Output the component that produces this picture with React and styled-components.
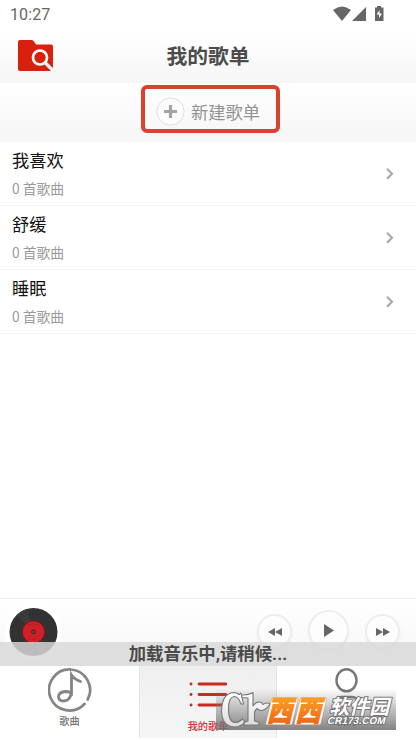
import React from "react";
import styled, { createGlobalStyle } from "styled-components";

const GlobalStyle = createGlobalStyle`
  * {
    box-sizing: border-box;
  }
  body {
    margin: 0;
    background: #fff;
    font-family: Roboto, "Noto Sans CJK SC", sans-serif;
  }
`;

const Screen = styled.div`
  position: relative;
  width: 416px;
  height: 740px;
  display: flex;
  flex-direction: column;
  background: #fff;
  overflow: hidden;
`;

const StatusBar = styled.div`
  height: 30px;
  padding: 0 31px 2px 10px;
  display: flex;
  align-items: center;
  justify-content: space-between;
  font-size: 16px;
  letter-spacing: 0.1px;
  color: #666;
`;

const Header = styled.header`
  height: 53px;
  padding: 0 18px 2px;
  display: grid;
  grid-template-columns: 36px 1fr 36px;
  align-items: center;
  background: linear-gradient(#fff, #f6f6f6);
  h1 {
    margin: 0;
    padding-top: 2px;
    font-size: 20.8px;
    line-height: 30px;
    font-weight: 700;
    text-align: center;
    color: #4c4c4c;
  }
`;

const CreateBar = styled.div`
  height: 59px;
  padding: 2px 0 0 5px;
  display: flex;
  justify-content: center;
  align-items: flex-start;
  background: linear-gradient(#fff, #f5f5f5);
`;

const CreateButton = styled.button`
  width: 139px;
  height: 48px;
  padding: 4px 0 0 11px;
  display: flex;
  align-items: center;
  gap: 6px;
  border: 4px solid #dc412d;
  border-radius: 6px;
  background: transparent;
  font-family: inherit;
  font-size: 17.3px;
  line-height: 24px;
  color: #929292;
  white-space: nowrap;
  span {
    padding-top: 3px;
  }
`;

const List = styled.ul`
  flex: 1;
  margin: 0;
  padding: 0;
  list-style: none;
`;

const Row = styled.li`
  height: 64px;
  padding: 0 22px 0 12px;
  display: flex;
  align-items: center;
  justify-content: space-between;
  border-bottom: 1px solid #f4f4f4;
`;

const RowName = styled.div`
  font-size: 17.2px;
  line-height: 26px;
  color: #111;
`;

const RowCount = styled.div`
  margin-top: 3px;
  margin-bottom: 1px;
  font-family: "Noto Sans CJK SC", sans-serif;
  font-size: 13.8px;
  line-height: 22px;
  color: #999;
`;

const Player = styled.div`
  height: 68px;
  padding: 0 16px 2px 9px;
  display: flex;
  align-items: center;
  border-top: 1px solid #efefef;
  background: linear-gradient(#fff, #f6f6f6);
`;

const Controls = styled.div`
  margin-left: auto;
  display: flex;
  align-items: center;
  gap: 16px;
`;

const RoundButton = styled.button`
  width: ${(p) => (p.$big ? 41 : 35)}px;
  height: ${(p) => (p.$big ? 41 : 35)}px;
  margin-top: ${(p) => (p.$big ? -3 : 0)}px;
  padding: 0;
  display: flex;
  align-items: center;
  justify-content: center;
  border: 2.5px solid #eeeeee;
  border-radius: 50%;
  background: #fdfdfd;
  box-shadow: 0 1px 2px rgba(0, 0, 0, 0.07);
`;

const Toast = styled.div`
  position: absolute;
  left: 0;
  right: 0;
  bottom: 74px;
  height: 24px;
  background: rgba(217, 217, 217, 0.83);
  font-size: 17.4px;
  line-height: 25px;
  font-weight: 700;
  text-align: center;
  color: #4a4a4a;
`;

const TabBar = styled.nav`
  height: 74px;
  padding-bottom: 2px;
  display: grid;
  grid-template-columns: 139px 138px 139px;
`;

const Tab = styled.div`
  padding-top: 1px;
  display: flex;
  flex-direction: column;
  align-items: center;
  border: solid #e4e4e4;
  border-width: ${(p) => (p.$active ? "0 1px" : "0")};
  background: ${(p) => (p.$active ? "linear-gradient(#efefef, #f6f6f6)" : "#fff")};
  font-size: 10.2px;
  font-weight: 500;
  line-height: 14px;
  color: ${(p) => (p.$active ? "#d2303a" : "#777")};
  svg {
    margin-bottom: ${(p) => (p.$active ? 8 : 3)}px;
  }
`;

const Watermark = styled.svg`
  position: absolute;
  left: 214px;
  top: 684px;
`;

const playlists = [
  { name: "我喜欢", count: 0 },
  { name: "舒缓", count: 0 },
  { name: "睡眠", count: 0 },
];

const StatusIcons = () => (
  <svg width="52" height="16" viewBox="0 0 52 16" fill="#666">
    <path d="M0 4Q9 -3 18 4L9 15Z" />
    <path d="M33 1V15H19Z" />
    <path d="M44 0h4v1.500h2.500v13.500h-8.500v-13.500h2Z" />
    <path d="M46.500 4l-3 4.500h2.500V12l3-4.500H46.500Z" fill="#fff" />
  </svg>
);

const FolderSearch = () => (
  <svg width="36" height="32" viewBox="0 0 36 32">
    <path
      d="M2 0H14Q15 0 16 1.500L18 4.500H33Q35 4.500 35 6.500V29Q35 31 33 31H2Q0 31 0 29V2Q0 0 2 0Z"
      fill="#d8200c"
    />
    <circle cx="22" cy="17.500" r="7" fill="none" stroke="#fff" strokeWidth="2.700" />
    <path d="M27 22.500L35 30.500" stroke="#fff" strokeWidth="3.200" />
  </svg>
);

const PlusCircle = () => (
  <svg width="29" height="29" viewBox="0 0 29 29">
    <circle cx="14.500" cy="14.500" r="13.600" fill="#fcfcfc" stroke="#dedede" />
    <path d="M14.500 8v13M8 14.500h13" stroke="#a3a3a3" strokeWidth="3.200" />
  </svg>
);

const Chevron = () => (
  <svg width="8" height="12" viewBox="0 0 8 12">
    <path d="M1 .8l5 5-5 5" fill="none" stroke="#aaa" strokeWidth="2.200" />
  </svg>
);

const Vinyl = () => (
  <svg width="58" height="58" viewBox="0 0 58 58" style={{ marginLeft: -5 }}>
    <circle cx="29.500" cy="29" r="28.500" fill="#fff" />
    <circle cx="29.500" cy="29" r="24" fill="#343434" />
    <path d="M29.500 29L13 12A24 24 0 0 1 23 6ZM29.500 29L46 46A24 24 0 0 1 36 52Z" fill="#3e3e3e" />
    {[21, 18, 15].map((r) => (
      <circle key={r} cx="29.500" cy="29" r={r} fill="none" stroke="#2d2d2d" strokeWidth=".8" />
    ))}
    <circle cx="29.500" cy="29" r="11.300" fill="#cf2029" stroke="#651a1d" />
    <path d="M23 23q6.500-4 13 0M24 33h4m4 0h4m-9 3h5" fill="none" stroke="#b51a22" />
    <circle cx="29.500" cy="29" r="1.900" fill="#744" stroke="#501317" />
  </svg>
);

const NoteIcon = () => (
  <svg width="44" height="45" viewBox="0 0 44 45" fill="none" stroke="#858585" strokeLinecap="round">
    <path d="M36.500 37A20.500 20.500 0 1 1 39.700 32.500" strokeWidth="2.700" />
    <path
      d="M23.500 28V8Q26 12 32.500 14.500M23.500 25.500Q22 34 15.500 34Q10.500 34 10.500 29.500Q11 25 17.500 24.500Q23.500 24.500 23.500 28"
      strokeWidth="2.800"
    />
  </svg>
);

const ListIcon = () => (
  <svg width="38" height="45" viewBox="0 0 38 45" stroke="#c42c1e" strokeLinecap="round" strokeWidth="2.800">
    <path d="M2 17h.1M10 17h27M2 27.500h.1M10 27.500h27M2 38h.1M10 38h27" />
  </svg>
);

const UserIcon = () => (
  <svg width="36" height="45" viewBox="0 0 36 45" fill="none" stroke="#777" strokeWidth="2.400">
    <ellipse cx="17.500" cy="13.300" rx="10" ry="11" />
    <path d="M7 42V35Q7 30 12 30H23Q28 30 28 35V42" />
  </svg>
);

const SiteMark = () => (
  <Watermark width="186" height="56" viewBox="0 0 186 56">
    <defs>
      <linearGradient id="shade" x2="0" y2="1">
        <stop stopColor="#777" stopOpacity=".04" />
        <stop offset="1" stopColor="#6e6e6e" stopOpacity=".86" />
      </linearGradient>
      <linearGradient id="orange" x2="0" y2="1">
        <stop stopColor="#fbb52a" />
        <stop offset="1" stopColor="#ee5a12" />
      </linearGradient>
      <linearGradient id="silver" x2="0" y2="1">
        <stop stopColor="#fff" />
        <stop offset="1" stopColor="#dcdcdc" />
      </linearGradient>
    </defs>
    <rect x="2" y="6" width="180" height="40" fill="url(#shade)" />
    <g fill="url(#silver)" stroke="#777" strokeWidth="1.100" strokeLinejoin="round">
      <path d="M27 9L29.500 20H27Q24.500 12.500 20 12.500Q14.500 13.500 14.500 25Q14.500 38 21 38.500Q25 38.500 28.500 35L31 38Q26.500 43 20 43Q7.500 42 7.500 26Q8 10 19.500 8.500Q23 8.500 25 10.500Z" />
      <path d="M27.500 11Q34 11.500 39 8.500V22Q42 17.500 46 18Q48 18.500 49 20.500Q52 18 56 19.500Q54 25 48 26.500Q44 26.500 43 24.500Q40.500 26 40.500 30V37L45 38.500V41H30V38.500L34 37V14L28 13.500Z" />
    </g>
    <g transform="skewX(-13.500)">
      {[62, 90.5].map((x) => (
        <g key={x}>
          <rect x={x - 0.8} y="13.800" width="26.600" height="27" rx="1.500" fill="#fff" stroke="#a77c63" strokeWidth=".4" />
          <text
            transform={`translate(${x} 37.200) scale(1 1.140)`}
            fontFamily="Noto Sans CJK SC"
            fontSize="25"
            fontWeight="700"
            fill="url(#orange)"
            stroke="url(#orange)"
            strokeWidth="1.500"
          >
            西
          </text>
        </g>
      ))}
      <g fill="#fff" stroke="#777" strokeWidth="2" paintOrder="stroke">
        <text x="122.500" y="30.500" fontFamily="Noto Sans CJK SC" fontSize="20" fontWeight="700">
          软件园
        </text>
        <text x="122.500" y="40" fontFamily="Liberation Sans" fontSize="10" fontWeight="700" textLength="58">
          CR173.COM
        </text>
      </g>
    </g>
  </Watermark>
);

export default function App() {
  return (
    <>
      <GlobalStyle />
      <Screen>
        <StatusBar>
          <span>10:27</span>
          <StatusIcons />
        </StatusBar>
        <Header>
          <FolderSearch />
          <h1>我的歌单</h1>
        </Header>
        <CreateBar>
          <CreateButton>
            <PlusCircle />
            <span>新建歌单</span>
          </CreateButton>
        </CreateBar>
        <List>
          {playlists.map((item) => (
            <Row key={item.name}>
              <div>
                <RowName>{item.name}</RowName>
                <RowCount>{item.count} 首歌曲</RowCount>
              </div>
              <Chevron />
            </Row>
          ))}
        </List>
        <Player>
          <Vinyl />
          <Controls>
            <RoundButton>
              <svg width="14" height="8" viewBox="0 0 14 8" fill="#666">
                <path d="M7 0V8L0 4ZM14 0V8L7 4Z" />
              </svg>
            </RoundButton>
            <RoundButton $big>
              <svg width="10" height="13" viewBox="0 0 10 13" fill="#666">
                <path d="M0 0L10 6.500L0 13Z" />
              </svg>
            </RoundButton>
            <RoundButton>
              <svg width="14" height="8" viewBox="0 0 14 8" fill="#666">
                <path d="M0 0V8L7 4ZM7 0V8L14 4Z" />
              </svg>
            </RoundButton>
          </Controls>
        </Player>
        <TabBar>
          <Tab>
            <NoteIcon />
            歌曲
          </Tab>
          <Tab $active>
            <ListIcon />
            我的歌单
          </Tab>
          <Tab>
            <UserIcon />
            我的
          </Tab>
        </TabBar>
        <Toast>加载音乐中,请稍候...</Toast>
        <SiteMark />
      </Screen>
    </>
  );
}
